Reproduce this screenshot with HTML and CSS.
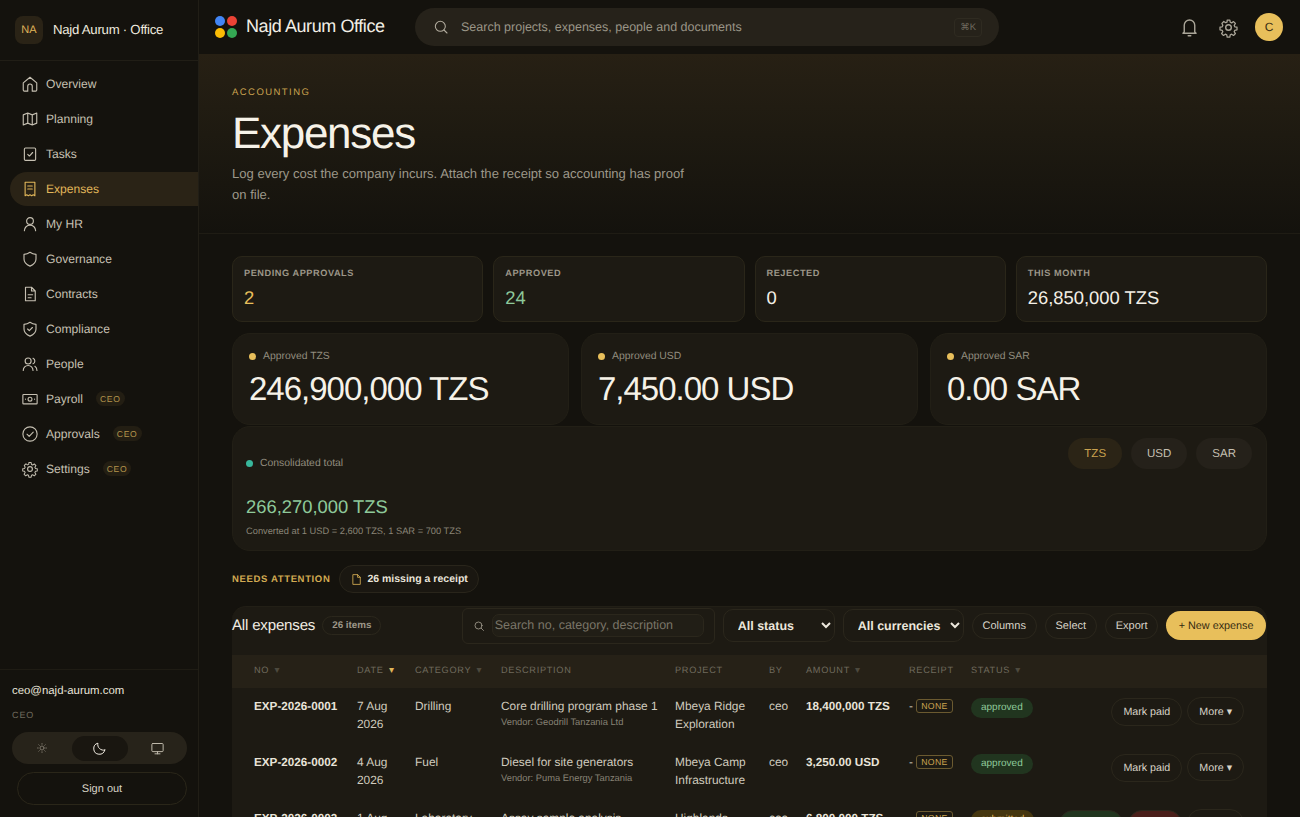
FILE: index.html
```html
<!DOCTYPE html>
<html lang="en">

<head>
  <meta charset="UTF-8">
  <meta name="viewport" content="width=device-width, initial-scale=1.0">
  <title>Expenses - Najd Aurum Office</title>
  <link rel="stylesheet" href="styles.css">
</head>

<body>
  <aside class="sidebar">
    <div class="brand">
      <div class="brand-mark">NA</div>
      <span class="brand-name">Najd Aurum · Office</span>
    </div>
    <nav class="nav">
      <a class="nav-item"><svg class="ico" viewBox="0 0 24 24"><path d="M3 10.500 12 3l9 7.500V20a1.500 1.500 0 0 1-1.500 1.500H15V15a3 3 0 0 0-6 0v6.500H4.500A1.500 1.500 0 0 1 3 20z"/></svg>Overview</a>
      <a class="nav-item"><svg class="ico" viewBox="0 0 24 24"><path d="M3 6.500 9 4l6 2.500L21 4v13.500L15 20l-6-2.500L3 20zM9 4v13.500M15 6.500V20"/></svg>Planning</a>
      <a class="nav-item"><svg class="ico" viewBox="0 0 24 24"><rect x="4.500" y="4" width="15" height="16.500" rx="1.500"/><path d="m9 12.500 2.200 2.200L15.500 10"/></svg>Tasks</a>
      <a class="nav-item active"><svg class="ico" viewBox="0 0 24 24"><path d="M5.500 3h13v18l-2.200-1.200-2.100 1.200-2.200-1.200-2.200 1.200-2.100-1.200L5.500 21zM9 8h6M9 12h6"/></svg>Expenses</a>
      <a class="nav-item"><svg class="ico" viewBox="0 0 24 24"><circle cx="12" cy="8" r="4.500"/><path d="M4.500 21a7.500 7.500 0 0 1 15 0"/></svg>My HR</a>
      <a class="nav-item"><svg class="ico" viewBox="0 0 24 24"><path d="M12 3c2.500 1.800 5 2.600 8 2.800V12c0 4.500-3 7.500-8 9.500-5-2-8-5-8-9.500V5.800C7 5.600 9.500 4.800 12 3z"/></svg>Governance</a>
      <a class="nav-item"><svg class="ico" viewBox="0 0 24 24"><path d="M6 3h8l5 5v13H6zM14 3v5h5M9.500 13h6M9.500 17h4"/></svg>Contracts</a>
      <a class="nav-item"><svg class="ico" viewBox="0 0 24 24"><path d="M12 3c2.500 1.800 5 2.600 8 2.800V12c0 4.500-3 7.500-8 9.500-5-2-8-5-8-9.500V5.800C7 5.600 9.500 4.800 12 3z"/><path d="m8.800 12 2.300 2.300 4.100-4.300"/></svg>Compliance</a>
      <a class="nav-item"><svg class="ico" viewBox="0 0 24 24"><circle cx="9.500" cy="8" r="4"/><path d="M3 20.500a6.500 6.500 0 0 1 13 0M16 4.300a4 4 0 0 1 0 7.400M18.500 15c1.800 1.200 2.800 3 2.800 5.500"/></svg>People</a>
      <a class="nav-item"><svg class="ico" viewBox="0 0 24 24"><rect x="2.500" y="6" width="19" height="12.500" rx="1"/><circle cx="12" cy="12.200" r="2.600"/><path d="M6 12.200h.1M18 12.200h.1"/></svg>Payroll<span class="ceo-tag">CEO</span></a>
      <a class="nav-item"><svg class="ico" viewBox="0 0 24 24"><circle cx="12" cy="12" r="9.500"/><path d="m8 12.300 2.900 2.900L16.300 9.500"/></svg>Approvals<span class="ceo-tag">CEO</span></a>
      <a class="nav-item"><svg class="ico" viewBox="0 0 24 24"><circle cx="12" cy="12" r="3.200"/><path d="M10.300 2.500h3.400l.5 2.800 1.800.8 2.400-1.600 2.400 2.400-1.600 2.400.8 1.800 2.800.5v3.400l-2.800.5-.8 1.800 1.600 2.400-2.400 2.400-2.400-1.600-1.800.8-.5 2.800h-3.400l-.5-2.800-1.800-.8-2.400 1.600-2.400-2.400 1.600-2.400-.8-1.800-2.800-.5v-3.400l2.800-.5.8-1.800L3.600 6.700 6 4.300l2.400 1.600 1.800-.8z" transform="translate(1.200 1.200) scale(.9)"/></svg>Settings<span class="ceo-tag">CEO</span></a>
    </nav>
    <div class="side-foot">
      <div class="user-mail">ceo@najd-aurum.com</div>
      <div class="user-role">CEO</div>
      <div class="theme-switch">
        <span class="theme-btn"><svg viewBox="0 0 24 24" class="ico-sun"><circle cx="12" cy="12" r="4"/><path d="M12 3v1.500M12 19.500V21M3 12h1.500M19.500 12H21M5.600 5.600l1 1M17.400 17.400l1 1M5.600 18.400l1-1M17.400 6.600l1-1"/></svg></span>
        <span class="theme-btn on"><svg viewBox="0 0 24 24"><path d="M20.500 14.500A9 9 0 0 1 9.500 3.500a9 9 0 1 0 11 11z"/></svg></span>
        <span class="theme-btn"><svg viewBox="0 0 24 24"><rect x="3" y="4" width="18" height="13" rx="1.500"/><path d="M12 17v3.500M8 20.500h8"/></svg></span>
      </div>
      <button class="sign-out">Sign out</button>
    </div>
  </aside>

  <div class="main">
    <header class="topbar">
      <div class="logo-dots"><i class="d-blue"></i><i class="d-red"></i><i class="d-yellow"></i><i class="d-green"></i></div>
      <div class="app-name">Najd Aurum Office</div>
      <div class="global-search">
        <svg viewBox="0 0 24 24"><circle cx="11" cy="11" r="7.500"/><path d="m16.500 16.500 4.500 4.500"/></svg>
        <span>Search projects, expenses, people and documents</span>
        <kbd>⌘K</kbd>
      </div>
      <div class="top-actions">
        <svg viewBox="0 0 24 24"><path d="M6 17V9.500a6 6 0 0 1 12 0V17l1.500 1.500h-15zM10.500 21.500h3"/></svg>
        <svg viewBox="0 0 24 24"><circle cx="12" cy="12" r="3.200"/><path d="M10.300 2.500h3.400l.5 2.800 1.800.8 2.400-1.600 2.400 2.400-1.600 2.400.8 1.800 2.800.5v3.400l-2.800.5-.8 1.800 1.600 2.400-2.400 2.400-2.400-1.600-1.800.8-.5 2.800h-3.400l-.5-2.800-1.800-.8-2.400 1.600-2.400-2.400 1.600-2.400-.8-1.800-2.800-.5v-3.400l2.800-.5.8-1.800L3.600 6.700 6 4.300l2.400 1.600 1.800-.8z" transform="translate(1.200 1.200) scale(.9)"/></svg>
        <div class="avatar">C</div>
      </div>
    </header>

    <section class="hero">
      <div class="eyebrow">ACCOUNTING</div>
      <h1>Expenses</h1>
      <p>Log every cost the company incurs. Attach the receipt so accounting has proof on file.</p>
    </section>

    <div class="content">
      <div class="stat-row">
        <div class="stat"><div class="stat-label">PENDING APPROVALS</div><div class="stat-value gold">2</div></div>
        <div class="stat"><div class="stat-label">APPROVED</div><div class="stat-value green">24</div></div>
        <div class="stat"><div class="stat-label">REJECTED</div><div class="stat-value">0</div></div>
        <div class="stat"><div class="stat-label">THIS MONTH</div><div class="stat-value">26,850,000 TZS</div></div>
      </div>
      <div class="money-row">
        <div class="money"><div class="money-label"><i class="dot"></i>Approved TZS</div><div class="money-value">246,900,000 TZS</div></div>
        <div class="money"><div class="money-label"><i class="dot"></i>Approved USD</div><div class="money-value">7,450.00 USD</div></div>
        <div class="money"><div class="money-label"><i class="dot"></i>Approved SAR</div><div class="money-value">0.00 SAR</div></div>
      </div>
      <div class="total">
        <div class="total-left">
          <div class="total-label"><i class="dot teal"></i>Consolidated total</div>
          <div class="total-value">266,270,000 TZS</div>
          <div class="total-note">Converted at 1 USD = 2,600 TZS, 1 SAR = 700 TZS</div>
        </div>
        <div class="cur-tabs">
          <span class="cur on">TZS</span><span class="cur">USD</span><span class="cur">SAR</span>
        </div>
      </div>
      <div class="attention">
        <span class="attention-label">NEEDS ATTENTION</span>
        <span class="attention-chip"><svg viewBox="0 0 24 24"><path d="M6 3h8l5 5v13H6zM14 3v5h5"/></svg>26 missing a receipt</span>
      </div>

      <div class="table-card">
        <div class="toolbar">
          <h2>All expenses</h2>
          <span class="count">26 items</span>
          <div class="tools">
            <div class="table-search">
              <svg viewBox="0 0 24 24"><circle cx="11" cy="11" r="7"/><path d="m16.500 16.500 4.500 4.500"/></svg>
              <input type="text" placeholder="Search no, category, description">
            </div>
            <select class="pick pick-status"><option>All status</option></select>
            <select class="pick pick-cur"><option>All currencies</option></select>
            <button class="tool-btn">Columns</button>
            <button class="tool-btn">Select</button>
            <button class="tool-btn">Export</button>
            <button class="new-btn">+ New expense</button>
          </div>
        </div>
        <table>
          <colgroup>
            <col class="c-no"><col class="c-date"><col class="c-cat"><col class="c-desc"><col class="c-proj"><col class="c-by"><col class="c-amt"><col class="c-rec"><col class="c-stat"><col class="c-act">
          </colgroup>
          <thead>
            <tr>
              <th>NO <span class="sort">▾</span></th>
              <th>DATE <span class="sort on">▾</span></th>
              <th>CATEGORY <span class="sort">▾</span></th>
              <th>DESCRIPTION</th>
              <th>PROJECT</th>
              <th>BY</th>
              <th>AMOUNT <span class="sort">▾</span></th>
              <th>RECEIPT</th>
              <th>STATUS <span class="sort">▾</span></th>
              <th></th>
            </tr>
          </thead>
          <tbody>
            <tr>
              <td class="strong">EXP-2026-0001</td>
              <td>7 Aug 2026</td>
              <td>Drilling</td>
              <td>Core drilling program phase 1<small>Vendor: Geodrill Tanzania Ltd</small></td>
              <td>Mbeya Ridge Exploration</td>
              <td>ceo</td>
              <td class="strong">18,400,000 TZS</td>
              <td>- <span class="none">NONE</span></td>
              <td><span class="pill ok">approved</span></td>
              <td class="acts"><button class="row-btn">Mark paid</button><button class="row-btn">More ▾</button></td>
            </tr>
            <tr>
              <td class="strong">EXP-2026-0002</td>
              <td>4 Aug 2026</td>
              <td>Fuel</td>
              <td>Diesel for site generators<small>Vendor: Puma Energy Tanzania</small></td>
              <td>Mbeya Camp Infrastructure</td>
              <td>ceo</td>
              <td class="strong">3,250.00 USD</td>
              <td>- <span class="none">NONE</span></td>
              <td><span class="pill ok">approved</span></td>
              <td class="acts"><button class="row-btn">Mark paid</button><button class="row-btn">More ▾</button></td>
            </tr>
            <tr>
              <td class="strong">EXP-2026-0003</td>
              <td>1 Aug 2026</td>
              <td>Laboratory</td>
              <td>Assay sample analysis<small>Vendor: SGS Tanzania</small></td>
              <td>Highlands Survey</td>
              <td>ceo</td>
              <td class="strong">6,800,000 TZS</td>
              <td>- <span class="none">NONE</span></td>
              <td><span class="pill wait">submitted</span></td>
              <td class="acts"><button class="row-btn yes">Approve</button><button class="row-btn no">Reject</button><button class="row-btn">More ▾</button></td>
            </tr>
          </tbody>
        </table>
      </div>
    </div>
  </div>
</body>

</html>
```
FILE: styles.css
```css
* {
  box-sizing: border-box;
}

html,
body {
  height: 817px;
  margin: 0;
  overflow: hidden;
}

body {
  display: flex;
  font-family: "Liberation Sans", Arial, sans-serif;
  text-rendering: geometricPrecision;
  background: #13110c;
  color: #f3efe6;
}

svg {
  fill: none;
  stroke: currentColor;
  stroke-width: 1.6;
  stroke-linecap: round;
  stroke-linejoin: round;
}

button,
select,
input {
  text-rendering: geometricPrecision;
}

/* Sidebar */
.sidebar {
  width: 199px;
  flex: none;
  height: 817px;
  display: flex;
  flex-direction: column;
  background: #14120d;
  border-right: 1px solid #211e16;
}

.brand {
  height: 61px;
  display: flex;
  align-items: center;
  gap: 10px;
  padding: 0 15px;
  border-bottom: 1px solid #211e16;
}

.brand-mark {
  width: 28px;
  height: 28px;
  border-radius: 8px;
  background: #2a2316;
  color: #e0b65a;
  font-size: 11px;
  display: flex;
  align-items: center;
  justify-content: center;
}

.brand-name {
  font-size: 13.200px;
  letter-spacing: -0.25px;
  color: #efeadf;
  padding-bottom: 2px;
}

.nav {
  padding: 5px 0 0 10px;
  flex: 1;
}

.nav-item {
  height: 35px;
  display: flex;
  align-items: center;
  padding-left: 11px;
  font-size: 12.100px;
  color: #c6c0b2;
  border-radius: 17px 0 0 17px;
}

.nav-item .ico {
  width: 18px;
  height: 18px;
  margin-right: 7px;
  flex: none;
  stroke-width: 1.5;
}

.nav-item.active {
  background: #2a2316;
  color: #e0b65a;
  height: 34px;
  margin: 1px 0 0;
  padding-bottom: 1px;
}

.ceo-tag {
  margin-left: 13px;
  padding: 2.500px 4px;
  border-radius: 8px;
  background: #231e13;
  color: #b4944c;
  font-size: 8.600px;
  letter-spacing: 0.7px;
}

.side-foot {
  border-top: 1px solid #1f1c14;
  padding: 14px 12px 12px;
  height: 148px;
}

.user-mail {
  font-size: 11.400px;
  color: #e9e4d9;
  line-height: 15px;
}

.user-role {
  margin-top: 10px;
  font-size: 9px;
  letter-spacing: 0.9px;
  color: #6f6a5e;
  line-height: 12px;
}

.theme-switch {
  margin-top: 11px;
  height: 32px;
  width: 175px;
  border-radius: 16px;
  background: #27231a;
  display: flex;
  align-items: center;
  padding: 4px 0;
}

.theme-btn {
  flex: 1;
  height: 25px;
  display: flex;
  align-items: center;
  justify-content: center;
  color: #bdb7a9;
  border-radius: 13px;
}

.theme-btn svg {
  width: 15px;
  height: 15px;
}

.theme-btn .ico-sun {
  width: 12px;
  height: 12px;
  color: #8d877a;
}

.theme-btn.on {
  flex: none;
  width: 56px;
  background: #191610;
  color: #f1ece2;
}

.sign-out {
  display: block;
  width: 170px;
  height: 33px;
  margin: 8px 0 0 5px;
  border: 1px solid #2a2619;
  border-radius: 17px;
  background: transparent;
  color: #d8d3c7;
  font: 11px "Liberation Sans", Arial, sans-serif;
}

/* Main */
.main {
  flex: 1;
  min-width: 0;
}

.topbar {
  height: 54px;
  display: flex;
  align-items: center;
  padding-left: 16px;
  background: #14120d;
}

.logo-dots {
  width: 22px;
  display: grid;
  grid-template-columns: 10px 10px;
  gap: 2px;
  margin-right: 9px;
}

.logo-dots i {
  height: 10px;
  border-radius: 50%;
}

.d-blue { background: #4285f4; }
.d-red { background: #ea4335; }
.d-yellow { background: #fbbc05; }
.d-green { background: #34a853; }

.app-name {
  width: 169px;
  font-size: 18px;
  letter-spacing: -0.42px;
  color: #f2eee5;
  white-space: nowrap;
  padding-bottom: 2px;
}

.global-search {
  width: 584px;
  height: 38px;
  display: flex;
  align-items: center;
  border-radius: 19px;
  background: #26221a;
  padding: 0 6px 0 18px;
  font-size: 12.500px;
  color: #9a9587;
}

.global-search svg {
  width: 16px;
  height: 16px;
  margin-right: 12px;
  color: #b2ac9e;
}

.global-search span {
  flex: 1;
}

.global-search kbd {
  font: 9.500px "Liberation Sans", Arial, sans-serif;
  color: #6f6a5e;
  border: 1px solid #2f2b21;
  border-radius: 4px;
  padding: 3px 5px;
  margin-right: 11px;
}

.top-actions {
  margin-left: auto;
  display: flex;
  align-items: center;
  gap: 18px;
  padding-right: 17px;
  color: #aaa598;
}

.top-actions svg {
  width: 21px;
  height: 21px;
}

.avatar {
  width: 28px;
  height: 28px;
  margin-left: -2px;
  border-radius: 50%;
  background: #e8bf5b;
  color: #3a2f14;
  font-size: 12px;
  display: flex;
  align-items: center;
  justify-content: center;
}

.hero {
  height: 180px;
  padding: 33px 32px 0 33px;
  background: linear-gradient(180deg, #272014 0%, #1e1a11 45%, #14120d 100%);
  border-bottom: 1px solid #1f1c14;
}

.eyebrow {
  font-size: 9.500px;
  line-height: 12px;
  letter-spacing: 1.450px;
  color: #c9a24f;
}

h1 {
  margin: 9px 0 0;
  font-size: 44px;
  font-weight: 400;
  line-height: 52px;
  letter-spacing: -1.300px;
  color: #f6f2e8;
}

.hero p {
  margin: 3px 0 0;
  max-width: 458px;
  font-size: 13.050px;
  line-height: 21px;
  color: #9d988a;
}

.content {
  padding: 22px 33px 0 33px;
  background: #14120d;
}

.stat-row {
  display: grid;
  grid-template-columns: repeat(4, 1fr);
  gap: 10px;
}

.stat {
  height: 66px;
  padding: 10px 11px;
  border: 1px solid #2a2619;
  border-radius: 10px;
  background: #1d1a13;
}

.stat-label {
  font-size: 9.200px;
  font-weight: 700;
  line-height: 12px;
  letter-spacing: 0.55px;
  color: #9c9688;
}

.stat-value {
  margin-top: 7px;
  font-size: 18.400px;
  line-height: 24px;
  color: #f3efe6;
}

.gold { color: #e8bf5b; }
.green { color: #8ec99a; }

.money-row {
  margin-top: 11px;
  display: grid;
  grid-template-columns: repeat(3, 1fr);
  gap: 12px;
}

.money {
  height: 92px;
  padding: 15px 16px;
  border: 1px solid #221f16;
  border-radius: 18px;
  background: #1d1a13;
}

.money-label,
.total-label {
  display: flex;
  align-items: center;
  font-size: 10.400px;
  line-height: 15px;
  color: #918c7e;
}

.dot {
  width: 7px;
  height: 7px;
  margin-right: 7px;
  border-radius: 50%;
  background: #e8bf5b;
}

.dot.teal {
  background: #38b79c;
}

.money-value {
  margin-top: 4px;
  font-size: 33px;
  line-height: 42px;
  letter-spacing: -1px;
  color: #f6f2e8;
}

.total {
  margin-top: 1px;
  height: 125px;
  display: flex;
  justify-content: space-between;
  padding: 11px 14px 0 13px;
  border: 1px solid #221f16;
  border-radius: 18px;
  background: #1d1a13;
}

.total-label {
  margin-top: 18px;
}

.total-value {
  margin-top: 23px;
  font-size: 18.400px;
  line-height: 26px;
  color: #8ec99a;
}

.total-note {
  margin-top: 5px;
  font-size: 9.300px;
  line-height: 13px;
  color: #8a8577;
}

.cur-tabs {
  display: flex;
  gap: 9px;
}

.cur {
  height: 31px;
  padding: 0 16px;
  display: flex;
  align-items: center;
  border-radius: 16px;
  background: #25211a;
  font-size: 11.500px;
  color: #c6c0b2;
}

.cur.on {
  background: #2b2416;
  color: #c9a24f;
}

.attention {
  margin-top: 14px;
  display: flex;
  align-items: center;
  gap: 9px;
}

.attention-label {
  font-size: 9.500px;
  font-weight: 700;
  letter-spacing: 0.65px;
  color: #d2aa52;
}

.attention-chip {
  height: 28px;
  padding: 0 10px;
  display: flex;
  align-items: center;
  gap: 4px;
  border: 1px solid #29251b;
  border-radius: 14px;
  background: #1a1711;
  font-size: 10.500px;
  font-weight: 700;
  color: #e9e4d9;
}

.attention-chip svg {
  width: 13px;
  height: 13px;
  color: #d2aa52;
}

/* Table card */
.table-card {
  margin-top: 13px;
  border-radius: 14px 14px 0 0;
  background: #1d1a13;
  border-top: 1px solid #221f16;
}

.toolbar {
  height: 48px;
  padding-bottom: 11px;
  display: flex;
  align-items: center;
}

.toolbar h2 {
  margin: 0;
  font-size: 15.100px;
  font-weight: 400;
  color: #f0ece2;
  letter-spacing: -0.2px;
}

.count {
  margin-left: 7px;
  padding: 3px 9px;
  border: 1px solid #2b271c;
  border-radius: 11px;
  font-size: 9.800px;
  font-weight: 700;
  color: #9c9688;
}

.tools {
  margin-left: auto;
  padding-right: 1px;
  display: flex;
  align-items: center;
  gap: 8px;
}

.table-search {
  width: 253px;
  height: 36px;
  display: flex;
  align-items: center;
  padding: 0 10px;
  border: 1px solid #2b271c;
  border-radius: 6px;
  color: #a9a396;
}

.table-search svg {
  width: 12px;
  height: 12px;
  flex: none;
  margin-right: 7px;
}

.table-search input {
  flex: 1;
  min-width: 0;
  height: 23px;
  padding: 0 2px 1px;
  border: 1px solid #2b271c;
  border-radius: 7px;
  background: #211e16;
  color: #e9e4d9;
  font: 12.500px "Liberation Sans", Arial, sans-serif;
}

.table-search input::placeholder {
  color: #7a7568;
  opacity: 1;
}

.pick {
  height: 33px;
  border: 1px solid #2b271c;
  border-radius: 10px;
  padding: 0 0 0 10px;
  background: #1d1a13;
  color: #ece7dc;
  font: 700 12.500px "Liberation Sans", Arial, sans-serif;
}

.pick-status {
  width: 112px;
}

.pick-cur {
  width: 121px;
}

.tool-btn {
  height: 26px;
  padding: 0 9.800px;
  border: 1px solid #2b271c;
  border-radius: 13px;
  background: transparent;
  color: #d8d3c7;
  font: 11px "Liberation Sans", Arial, sans-serif;
}

.new-btn {
  height: 29px;
  padding: 0 12.500px;
  border: 0;
  border-radius: 15px;
  background: #e8bf5b;
  color: #33290f;
  font: 10.800px "Liberation Sans", Arial, sans-serif;
}

table {
  width: 100%;
  border-collapse: collapse;
  table-layout: fixed;
  font-size: 11.900px;
  color: #d0cbbe;
}

.c-no { width: 117px; }
.c-date { width: 58px; }
.c-cat { width: 86px; }
.c-desc { width: 174px; }
.c-proj { width: 94px; }
.c-by { width: 37px; }
.c-amt { width: 103px; }
.c-rec { width: 62px; }
.c-stat { width: 76px; }

th {
  height: 33px;
  padding: 0 0 3px 8px;
  text-align: left;
  font-size: 9.200px;
  font-weight: 400;
  line-height: 12px;
  letter-spacing: 0.7px;
  color: #6f6a5d;
  background: #262117;
}

th:first-child,
td:first-child {
  padding-left: 22px;
}

.sort {
  color: #4d493e;
  font-size: 10px;
  line-height: 1;
  margin-left: 2px;
}

.sort.on {
  color: #e0b65a;
}

td {
  padding: 9px 0 0 8px;
  height: 56px;
  vertical-align: top;
  line-height: 18px;
}

td.strong {
  padding-top: 9.500px;
  font-size: 11.700px;
  font-weight: 700;
  color: #e9e4d9;
}

small {
  display: block;
  margin-top: 1px;
  font-size: 9.350px;
  line-height: 12px;
  color: #878275;
}

.none {
  display: inline-block;
  border: 1px solid #6b5a30;
  border-radius: 3px;
  padding: 0 4px;
  font-size: 8.700px;
  line-height: 12px;
  letter-spacing: 0.3px;
  color: #c9a24f;
  vertical-align: 1px;
}

.pill {
  display: inline-block;
  height: 20px;
  padding: 0 10px;
  border-radius: 10px;
  font-size: 10px;
  line-height: 20px;
}

.ok {
  background: #21351f;
  color: #8ec99a;
}

.wait {
  background: #45360f;
  color: #e0b65a;
}

.acts {
  padding: 9px 23px 0 0;
  text-align: right;
  white-space: nowrap;
}

.row-btn {
  height: 28px;
  padding: 0 11px;
  margin-left: 5px;
  border: 1px solid #2b271c;
  border-radius: 14px;
  background: transparent;
  color: #d8d3c7;
  font: 10.700px "Liberation Sans", Arial, sans-serif;
}

.row-btn.yes {
  background: #21351f;
  color: #8ec99a;
}

.row-btn.no {
  background: #4a1f1a;
  color: #e08a7e;
}
```
